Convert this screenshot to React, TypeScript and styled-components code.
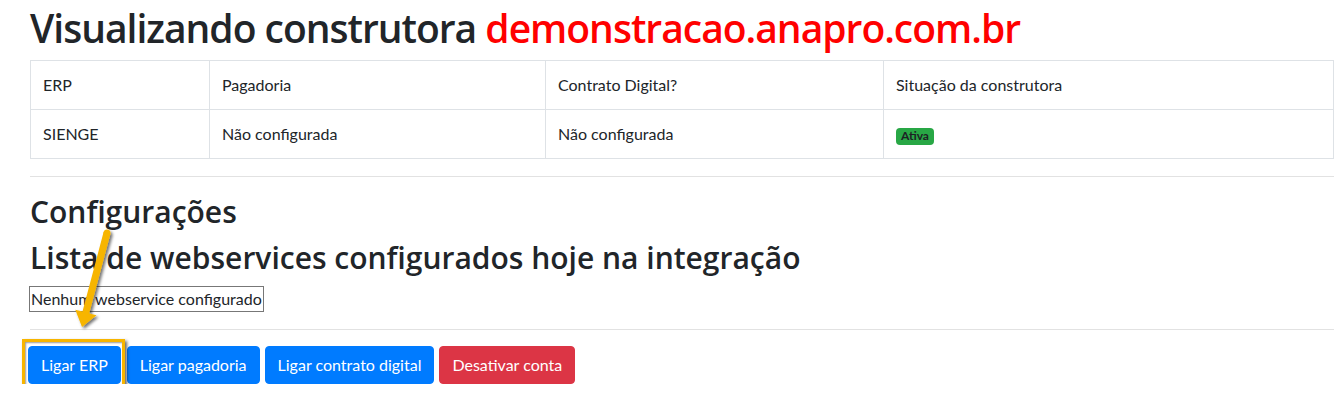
import styled, { createGlobalStyle } from "styled-components";

const GlobalStyle = createGlobalStyle`
  body {
    margin: 0;
    background: #fff;
    color: #212529;
    font-family: Lato, "Liberation Sans", sans-serif;
    font-size: 16px;
    line-height: 1.5;
  }
`;

const Page = styled.div`
  position: relative;
  padding: 5px 1px 0 30px;
`;

const Title = styled.h1`
  margin: 0 0 8px;
  font-family: "Open Sans", sans-serif;
  font-size: 39px;
  font-weight: 600;
  line-height: 1.2;
  letter-spacing: -1px;
`;

const Domain = styled.span`
  color: #ff0000;
`;

const Table = styled.table`
  width: 100%;
  border-collapse: collapse;
  margin-bottom: 17px;

  td {
    border: 1px solid #dee2e6;
    padding: 12px;
    vertical-align: top;
  }
`;

const Badge = styled.span`
  display: inline-block;
  padding: 1px 5px 2px;
  font-size: 12px;
  font-weight: 700;
  line-height: 1.2;
  border-radius: 4px;
  background: #28a745;
  color: #1d2124;
`;

const Rule = styled.hr<{ $gap?: number }>`
  margin: ${(p) => p.$gap ?? 0}px 0 0;
  border: 0;
  border-top: 1px solid #e2e2e2;
`;

const Heading = styled.h3<{ $top: number; $bottom?: number }>`
  margin: ${(p) => p.$top}px 0 ${(p) => p.$bottom ?? 0}px;
  font-family: "Open Sans", sans-serif;
  font-size: 30px;
  font-weight: 600;
  line-height: 1.2;
`;

const EmptyBox = styled.div`
  width: fit-content;
  border: 1px solid #777;
  padding: 0 1px;
  margin-left: -1px;
  line-height: 24px;
`;

const Actions = styled.div`
  display: flex;
  gap: 5px;
  padding-top: 16px;
  margin-left: -2px;
`;

const Button = styled.button<{ $danger?: boolean }>`
  font-family: inherit;
  font-size: 16px;
  line-height: 1.5;
  padding: 6px 12px;
  border-radius: 4px;
  border: 1px solid ${(p) => (p.$danger ? "#dc3545" : "#007bff")};
  background: ${(p) => (p.$danger ? "#dc3545" : "#007bff")};
  color: #fff;
`;

const Highlight = styled.span`
  position: relative;
  display: inline-flex;
  margin-right: 1px;

  &::after {
    content: "";
    position: absolute;
    inset: -7px -4px -5px -6px;
    border: 3px solid #f7b500;
    box-shadow: 2px 2px 3px rgba(0, 0, 0, 0.6), inset 1px 1px 2px rgba(0, 0, 0, 0.4);
    pointer-events: none;
  }
`;

const Arrow = styled.svg`
  position: absolute;
  left: 66px;
  top: 224px;
  overflow: visible;
  pointer-events: none;
`;

export default function App() {
  return (
    <>
      <GlobalStyle />
      <Page>
        <Title>
          Visualizando construtora <Domain>demonstracao.anapro.com.br</Domain>
        </Title>
        <Table>
          <colgroup>
            <col style={{ width: 179 }} />
            <col style={{ width: 336 }} />
            <col style={{ width: 338 }} />
            <col />
          </colgroup>
          <tbody>
            <tr>
              <td>ERP</td>
              <td>Pagadoria</td>
              <td>Contrato Digital?</td>
              <td>Situação da construtora</td>
            </tr>
            <tr>
              <td>SIENGE</td>
              <td>Não configurada</td>
              <td>Não configurada</td>
              <td>
                <Badge>Ativa</Badge>
              </td>
            </tr>
          </tbody>
        </Table>
        <Rule />
        <Heading $top={17}>Configurações</Heading>
        <Heading $top={10} $bottom={10}>
          Lista de webservices configurados hoje na integração
        </Heading>
        <EmptyBox>Nenhum webservice configurado</EmptyBox>
        <Rule $gap={17} />
        <Actions>
          <Highlight>
            <Button>Ligar ERP</Button>
          </Highlight>
          <Button>Ligar pagadoria</Button>
          <Button>Ligar contrato digital</Button>
          <Button $danger>Desativar conta</Button>
        </Actions>
        <Arrow width="60" height="110" viewBox="0 0 60 110">
          <defs>
            <filter id="sh" x="-50%" y="-50%" width="200%" height="200%">
              <feDropShadow dx="2" dy="2" stdDeviation="1.5" floodColor="#000" floodOpacity="0.55" />
            </filter>
          </defs>
          <g filter="url(#sh)" fill="#f7b500">
            <circle cx="41" cy="9" r="3.5" />
            <path d="M37.6 8.1 L44.4 9.9 L23.2 89.4 L30.5 91.3 L16 103 L9.3 85.7 L16.5 87.6 Z" />
          </g>
        </Arrow>
      </Page>
    </>
  );
}
